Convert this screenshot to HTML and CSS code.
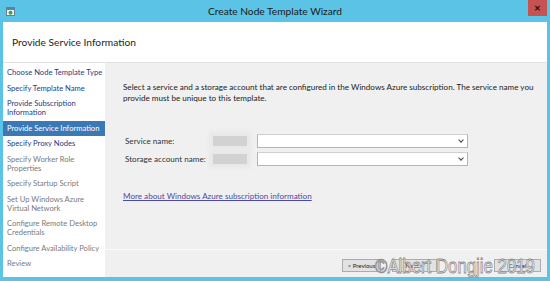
FILE: index.html
```html
<!DOCTYPE html>
<html lang="en">
<head>
  <meta charset="utf-8"/>
  <title>Create Node Template Wizard</title>
  <link rel="stylesheet" href="styles.css">
</head>
<body>
<div class="window">

  <!-- Title bar -->
  <div class="titlebar">
    <svg class="app-icon" width="9" height="9" viewBox="0 0 9 9">
      <rect x="0.5" y="0.5" width="8" height="8" fill="#f4f4f4" stroke="#6a7f8c"/>
      <rect x="1" y="1" width="7" height="2" fill="#4a86c0"/>
      <circle cx="4.5" cy="5.8" r="2" fill="#3aa04a"/>
    </svg>
    <span class="title">Create Node Template Wizard</span>
    <div class="close">&#x2715;</div>
  </div>

  <!-- Page header -->
  <div class="page-header">Provide Service Information</div>

  <div class="wizard-body">
    <nav class="steps">
      <a class="step done">Choose Node Template Type</a>
      <a class="step done">Specify Template Name</a>
      <a class="step done">Provide Subscription Information</a>
      <a class="step current">Provide Service Information</a>
      <a class="step done">Specify Proxy Nodes</a>
      <a class="step">Specify Worker Role Properties</a>
      <a class="step">Specify Startup Script</a>
      <a class="step">Set Up Windows Azure Virtual Network</a>
      <a class="step">Configure Remote Desktop Credentials</a>
      <a class="step">Configure Availability Policy</a>
      <a class="step">Review</a>
    </nav>

    <div class="pane">
      <div class="content">
        <p class="intro">Select a service and a storage account that are configured in the Windows Azure subscription. The service name you provide must be unique to this template.</p>

        <div class="form">
          <div class="form-row">
            <label>Service name:</label>
            <span class="redacted"></span>
            <div class="combo"><span class="chevron"></span></div>
          </div>
          <div class="form-row">
            <label>Storage account name:</label>
            <span class="redacted"></span>
            <div class="combo"><span class="chevron"></span></div>
          </div>
        </div>

        <a class="more-link" href="#">More about Windows Azure subscription information</a>
      </div>

      <div class="footer">
        <button class="btn">&lt; Previous</button>
        <button class="btn btn-next">Next &gt;</button>
        <button class="btn btn-cancel">Cancel</button>
      </div>
    </div>
  </div>

  <div class="watermark">©Albert Dongjie 2019</div>
</div>
</body>
</html>
```

FILE: styles.css
```css
/* -------- Variables -------- */
:root {
  --frame: #5bc3e5;
  --pane: #f0f0f0;
  --step-done: #1f3c84;
  --step-todo: #7a7a7a;
  --selected: #3b78b6;
}

* { box-sizing: border-box; }
html, body {
  margin: 0;
  padding: 0;
  font-family: Lato, "Open Sans", sans-serif;
  background: var(--frame);
}

/* -------- Window frame -------- */
.window {
  position: relative;
  width: 550px;
  height: 281px;
  display: flex;
  flex-direction: column;
  padding: 0 3px 4px 3px;
  background: var(--frame);
  overflow: hidden;
}

.titlebar {
  height: 22px;
  flex: none;
  display: flex;
  align-items: center;
  position: relative;
}
.app-icon { margin-left: 3px; margin-top: 1px; }
.title {
  position: absolute;
  left: 0;
  right: 0;
  text-align: center;
  font-size: 10.2px;
  color: #1b1b1b;
}
.close {
  position: absolute;
  top: 0;
  right: 0;
  width: 19px;
  height: 16px;
  background: #c75252;
  color: #2a0c0c;
  font-size: 8px;
  font-weight: 700;
  display: flex;
  align-items: center;
  justify-content: center;
}

/* -------- Header -------- */
.page-header {
  height: 40px;
  flex: none;
  background: #fff;
  padding-left: 9px;
  display: flex;
  align-items: center;
  font-size: 10.2px;
  color: #1e1e1e;
}

/* -------- Body -------- */
.wizard-body {
  flex: 1;
  display: flex;
  border-top: 1px solid #e2e2e2;
  min-height: 0;
}

.steps {
  width: 102px;
  flex: none;
  background: #fff;
  display: flex;
  flex-direction: column;
  padding-top: 2px;
}
.step {
  display: block;
  padding: 3px 2px 3.5px 4px;
  font-size: 7.6px;
  line-height: 9px;
  color: var(--step-todo);
}
.step.done { color: var(--step-done); }
.step.current {
  background: var(--selected);
  color: #fff;
}

.pane {
  flex: 1;
  display: flex;
  flex-direction: column;
  background: var(--pane);
}
.content {
  flex: 1;
  padding: 19px 6px 0 18px;
  font-size: 8.1px;
  color: #222;
}
.intro {
  margin: 0;
  line-height: 11px;
}

.form {
  margin-top: 30px;
  display: flex;
  flex-direction: column;
  gap: 4px;
}
.form-row {
  display: flex;
  align-items: center;
  padding-left: 2px;
}
.form-row label {
  width: 88px;
  color: #333;
}
.redacted {
  width: 34px;
  height: 10px;
  background: #d2d2d2;
  box-shadow: 0 0 4px 4px #e8e8e8;
  margin-right: 10px;
}
.combo {
  width: 211px;
  height: 14px;
  background: #fff;
  border: 1px solid #b4b4b4;
  border-top-color: #d0d0d0;
  position: relative;
}
.chevron {
  position: absolute;
  right: 4px;
  top: 3px;
  width: 4px;
  height: 4px;
  border-right: 1.2px solid #444;
  border-bottom: 1.2px solid #444;
  transform: rotate(45deg);
}

.more-link {
  display: inline-block;
  margin-top: 25px;
  color: #4b4aa6;
  text-decoration: underline;
}

/* -------- Footer -------- */
.footer {
  height: 28px;
  flex: none;
  border-top: 1px solid #fbfbfb;
  display: flex;
  align-items: center;
  padding: 0 6px 0 0;
  justify-content: flex-end;
}
.btn {
  height: 13px;
  padding: 0;
  font-family: inherit;
  font-size: 6px;
  color: #222;
  background: #e2e2e2;
  border: 1px solid #acacac;
  margin-top: 3px;
  white-space: nowrap;
  overflow: hidden;
}
.btn:first-child { width: 39px; }
.btn-next { width: 45px; margin-left: 11px; }
.btn-cancel { width: 47px; margin-left: 57px; }

/* -------- Watermark -------- */
.watermark {
  position: absolute;
  left: 375px;
  top: 254px;
  font-family: "Liberation Sans", Arial, sans-serif;
  font-size: 21px;
  color: #f6f6f6;
  -webkit-text-stroke: 0.8px #8a8a8a;
  white-space: nowrap;
  transform: scaleX(0.8);
  transform-origin: left top;
}
```
